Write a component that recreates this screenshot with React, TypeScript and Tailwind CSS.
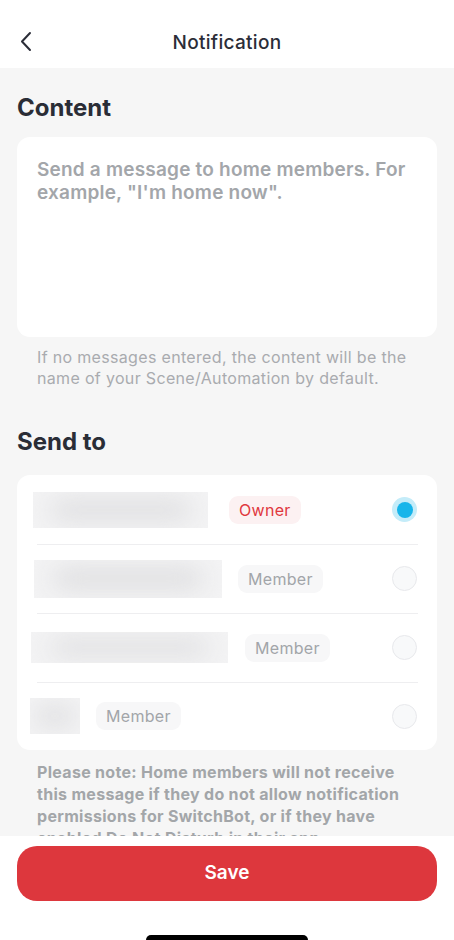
import React from "react";

const font = { fontFamily: "Inter, 'Noto Sans', 'Liberation Sans', sans-serif" };

function Blur({ w, h }: { w: number; h: number }) {
  return (
    <div
      className="relative shrink-0 overflow-hidden bg-[#f3f3f4]"
      style={{ width: w, height: h }}
    >
      <div className="absolute inset-x-[10%] inset-y-[25%] rounded-full bg-[#dcdcde] blur-md" />
    </div>
  );
}

function Radio({ on }: { on?: boolean }) {
  if (on)
    return (
      <div className="flex h-[25px] w-[25px] items-center justify-center rounded-full bg-[#c4ecf9]">
        <div className="h-[16px] w-[16px] rounded-full bg-[#17b5ea]" />
      </div>
    );
  return <div className="h-[25px] w-[25px] rounded-full border-[1.5px] border-[#e8e9ec] bg-[#f8f9fa]" />;
}

function Badge({ owner, children }: { owner?: boolean; children: React.ReactNode }) {
  return (
    <div
      className={
        "flex h-[28px] items-center rounded-[9px] px-[10px] text-[16px] tracking-[0.3px] " +
        (owner ? "bg-[#fcf1f2] text-[#e0383e]" : "bg-[#f7f7f8] text-[#a2a5a9]")
      }
    >
      {children}
    </div>
  );
}

function Row({
  first,
  bw,
  bh,
  bl,
  gap,
  owner,
  h = 69,
}: {
  first?: boolean;
  bw: number;
  bh: number;
  bl: number;
  gap: number;
  owner?: boolean;
  h?: number;
}) {
  return (
    <div className="relative flex items-center pr-[20px]" style={{ height: h }}>
      {!first && <div className="absolute left-[20px] right-[19px] top-0 h-px bg-[#eeeef0]" />}
      <div style={{ marginLeft: bl }}>
        <Blur w={bw} h={bh} />
      </div>
      <div style={{ marginLeft: gap }}>
        <Badge owner={owner}>{owner ? "Owner" : "Member"}</Badge>
      </div>
      <div className="flex-1" />
      <Radio on={owner} />
    </div>
  );
}

export default function App() {
  return (
    <div className="flex h-[940px] w-[454px] flex-col overflow-hidden bg-white" style={font}>
      <div className="relative flex h-[68px] shrink-0 items-center justify-center bg-white">
        <svg
          className="absolute left-[18px] top-[31px]"
          width="16"
          height="22"
          viewBox="0 0 16 22"
          fill="none"
          stroke="#2b2d38"
          strokeWidth="2"
          strokeLinecap="round"
          strokeLinejoin="round"
        >
          <path d="M12 2 L4 10.5 L12 19" />
        </svg>
        <div className="pt-[18px] text-[19px] font-medium tracking-[0.3px] text-[#2b2d38]">Notification</div>
      </div>

      <div className="flex-1 overflow-hidden bg-[#f6f6f6] px-[17px]">
        <div className="pt-[25px] text-[24px] font-bold leading-[30px] text-[#2a2d36]">Content</div>
        <div className="mt-[14px] h-[200px] rounded-[13px] bg-white px-[20px] pt-[21px]">
          <div className="text-[19px] font-semibold leading-[23px] tracking-[0.2px] text-[#a3a6aa]">
            Send a message to home members. For example, "I'm home now".
          </div>
        </div>
        <div className="mt-[10px] px-[20px] text-[16px] leading-[21px] tracking-[0.33px] text-[#a9abaf]">
          If no messages entered, the content will be the name of your Scene/Automation by default.
        </div>

        <div className="mt-[38px] text-[24px] font-bold leading-[30px] text-[#2a2d36]">Send to</div>
        <div className="mt-[18px] rounded-[13px] bg-white">
          <Row first owner bl={16} bw={175} bh={36} gap={21} />
          <Row bl={17} bw={188} bh={38} gap={16} />
          <Row bl={14} bw={197} bh={31} gap={17} />
          <Row bl={13} bw={50} bh={36} gap={16} h={68} />
        </div>
        <div className="mt-[11px] px-[20px] text-[16px] font-bold leading-[22px] tracking-[0.3px] text-[#a3a6a9]">
          Please note: Home members will not receive this message if they do not allow notification
          permissions for SwitchBot, or if they have enabled Do Not Disturb in their app.
        </div>
      </div>

      <div className="flex h-[104px] shrink-0 flex-col items-center bg-white px-[17px] pt-[10px]">
        <button className="flex h-[55px] w-full items-center justify-center rounded-[20px] bg-[#dd373d] text-[19px] font-semibold text-white">
          Save
        </button>
        <div className="flex-1" />
        <div className="h-[5px] w-[162px] rounded-t-full bg-black" />
      </div>
    </div>
  );
}
